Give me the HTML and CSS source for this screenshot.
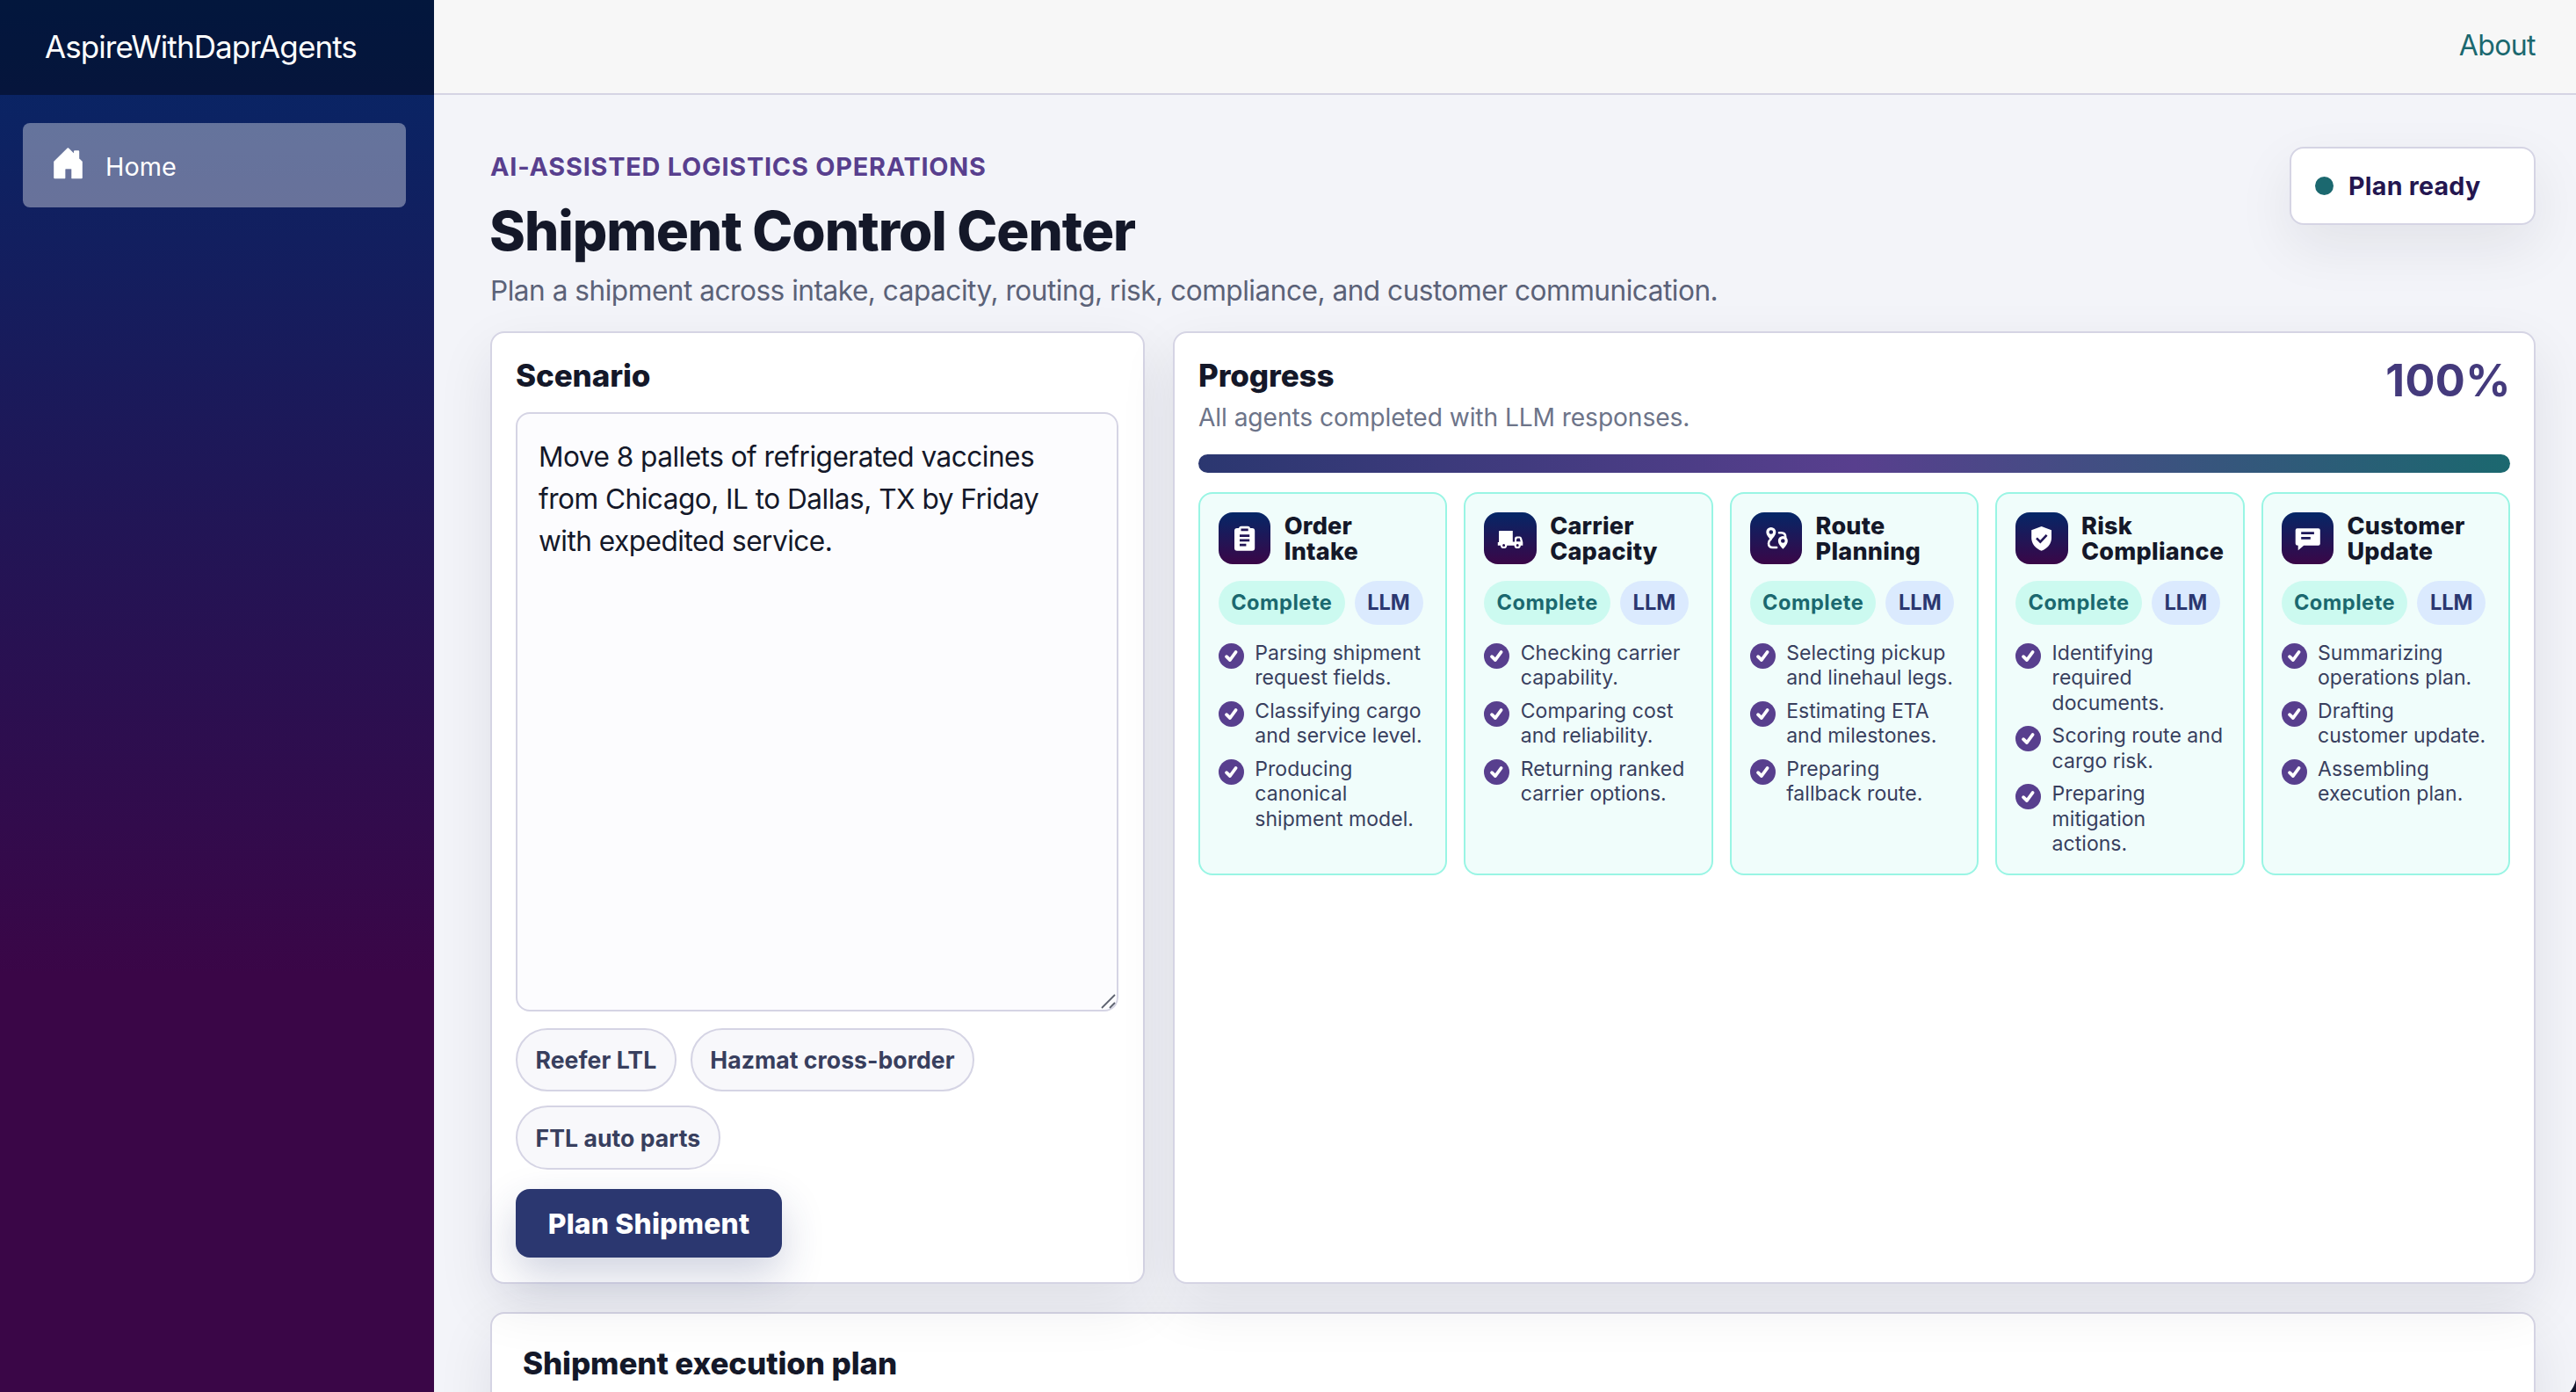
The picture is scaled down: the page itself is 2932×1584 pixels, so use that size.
FILE: index.html
```html
<!DOCTYPE html>
<html lang="en">
<head>
<meta charset="utf-8">
<title>Shipment Control Center</title>
<link rel="stylesheet" href="styles.css">
</head>
<body>
<svg class="defs" width="0" height="0" aria-hidden="true">
  <symbol id="check" viewBox="0 0 29 29">
    <circle cx="14.5" cy="14.5" r="14.5" fill="#583f8e"/>
    <path d="M9 15.2l4 3.8 6.6-9" fill="none" stroke="#fff" stroke-width="3.8" stroke-linecap="round" stroke-linejoin="round"/>
  </symbol>
</svg>
<div class="app">
  <aside class="sidebar">
    <div class="brand">AspireWithDaprAgents</div>
    <nav class="nav">
      <a class="nav-link">
        <svg class="home-icon" width="33" height="36" viewBox="0 0 33 36"><path d="M1.2 16.2L16.4 1.3 24 8.6V4.2h4.2v8.6l3.6 3.4v18.1H20.7V23.7h-8v10.6H1.2z" fill="#fff" stroke="#fff" stroke-width="2" stroke-linejoin="round"/><path d="M13.5 24.4h6.8V36h-6.8z" fill="#68729c"/></svg>
        <span>Home</span>
      </a>
    </nav>
  </aside>
  <main class="main">
    <div class="topbar"><a class="about">About</a></div>
    <div class="content">
      <header class="hero">
        <div>
          <p class="eyebrow">AI-ASSISTED LOGISTICS OPERATIONS</p>
          <h1 class="title">Shipment Control Center</h1>
          <p class="subtitle">Plan a shipment across intake, capacity, routing, risk, compliance, and customer communication.</p>
        </div>
        <div class="status"><span class="dot"></span><span>Plan ready</span></div>
      </header>

      <div class="panels">
        <section class="card scenario">
          <h2 class="heading">Scenario</h2>
          <div class="textarea">Move 8 pallets of refrigerated vaccines<br>from Chicago, IL to Dallas, TX by Friday<br>with expedited service.
            <svg class="grip" width="17" height="17" viewBox="0 0 17 17"><path d="M1 16L16 1M10 16l6-6" stroke="#5f6471" stroke-width="1.8"/></svg>
          </div>
          <div class="chips">
            <span class="chip">Reefer LTL</span>
            <span class="chip">Hazmat cross-border</span>
            <span class="chip">FTL auto parts</span>
          </div>
          <button class="plan-button">Plan Shipment</button>
        </section>

        <section class="card progress">
          <div class="progress-head">
            <div>
              <h2 class="heading">Progress</h2>
              <p class="progress-note">All agents completed with LLM responses.</p>
            </div>
            <div class="percent">100%</div>
          </div>
          <div class="bar"></div>
          <div class="agents">
            <article class="agent">
              <div class="agent-head">
                <span class="agent-icon"><svg viewBox="0 0 60 60"><rect x="18" y="18" width="23.2" height="25.8" rx="3" fill="#fff"/><rect x="23" y="15.7" width="13" height="8" rx="3" fill="#fff"/><path d="M25.5 18.4h8.2v2.8h-8.2zM24 25.2h11.2v2.7H24zM24 30.5h11.2v2.7H24zM24 35.8h7.4v2.7H24z" fill="#211455"/></svg></span>
                <h3 class="agent-name">Order<br>Intake</h3>
              </div>
              <div class="badges"><span class="badge done">Complete</span><span class="badge llm">LLM</span></div>
              <ul class="steps">
                <li><svg><use href="#check"/></svg><span>Parsing shipment<br>request fields.</span></li>
                <li><svg><use href="#check"/></svg><span>Classifying cargo<br>and service level.</span></li>
                <li><svg><use href="#check"/></svg><span>Producing<br>canonical<br>shipment model.</span></li>
              </ul>
            </article>
            <article class="agent">
              <div class="agent-head">
                <span class="agent-icon"><svg viewBox="0 0 60 60"><path d="M17.8 21h15v12.5h2.2V30q0-2.5 2.5-2.5h3.2q1.8 0 2.4 2l1.2 4.5v3.7H15.8V34h1.2V22q0-1 .8-1z" fill="#fff"/><path d="M37 33.2v-2.4l1.2-1.2h2.6l.9 3.6z" fill="#211455"/><circle cx="22.6" cy="37.4" r="2.6" fill="#2a0f4f" stroke="#fff" stroke-width="2.2"/><circle cx="38.2" cy="37.4" r="2.6" fill="#2a0f4f" stroke="#fff" stroke-width="2.2"/></svg></span>
                <h3 class="agent-name">Carrier<br>Capacity</h3>
              </div>
              <div class="badges"><span class="badge done">Complete</span><span class="badge llm">LLM</span></div>
              <ul class="steps">
                <li><svg><use href="#check"/></svg><span>Checking carrier<br>capability.</span></li>
                <li><svg><use href="#check"/></svg><span>Comparing cost<br>and reliability.</span></li>
                <li><svg><use href="#check"/></svg><span>Returning ranked<br>carrier options.</span></li>
              </ul>
            </article>
            <article class="agent">
              <div class="agent-head">
                <span class="agent-icon"><svg viewBox="0 0 60 60"><g fill="#fff" fill-rule="evenodd"><path d="M23.8 17a5.5 5.5 0 0 1 5.5 5.5c0 3.2-2.8 6.4-5.5 9.2-2.7-2.8-5.5-6-5.5-9.2A5.5 5.5 0 0 1 23.8 17zm0 3.2a2.3 2.3 0 1 0 0 4.6 2.3 2.3 0 0 0 0-4.6z"/><path d="M37.3 27a5.5 5.5 0 0 1 5.5 5.5c0 3.2-2.8 6.4-5.5 9.2-2.7-2.8-5.5-6-5.5-9.2a5.5 5.5 0 0 1 5.5-5.5zm0 3.2a2.3 2.3 0 1 0 0 4.6 2.3 2.3 0 0 0 0-4.6z"/></g><path d="M23.6 30.5q-2.6 2-2.6 4.7 0 4.8 4.8 4.8h4.3M33 23.2h2.5q4.7 0 4.7 5" fill="none" stroke="#fff" stroke-width="2.6" stroke-linecap="round"/></svg></span>
                <h3 class="agent-name">Route<br>Planning</h3>
              </div>
              <div class="badges"><span class="badge done">Complete</span><span class="badge llm">LLM</span></div>
              <ul class="steps">
                <li><svg><use href="#check"/></svg><span>Selecting pickup<br>and linehaul legs.</span></li>
                <li><svg><use href="#check"/></svg><span>Estimating ETA<br>and milestones.</span></li>
                <li><svg><use href="#check"/></svg><span>Preparing<br>fallback route.</span></li>
              </ul>
            </article>
            <article class="agent">
              <div class="agent-head">
                <span class="agent-icon"><svg viewBox="0 0 60 60"><path d="M29.6 16l11.4 4.2V29c0 6.800-4.600 12.200-11.400 14.700C22.800 41.200 18.200 35.800 18.200 29v-8.800z" fill="#fff"/><path d="M24 29.300l4.300 4.300 7.300-7.800" fill="none" stroke="#211455" stroke-width="2.600"/></svg></span>
                <h3 class="agent-name">Risk<br>Compliance</h3>
              </div>
              <div class="badges"><span class="badge done">Complete</span><span class="badge llm">LLM</span></div>
              <ul class="steps">
                <li><svg><use href="#check"/></svg><span>Identifying<br>required<br>documents.</span></li>
                <li><svg><use href="#check"/></svg><span>Scoring route and<br>cargo risk.</span></li>
                <li><svg><use href="#check"/></svg><span>Preparing<br>mitigation<br>actions.</span></li>
              </ul>
            </article>
            <article class="agent">
              <div class="agent-head">
                <span class="agent-icon"><svg viewBox="0 0 60 60"><path d="M17.700 18.200h24q2.100 0 2.100 2.100v15.400q0 2.100-2.100 2.100H25.200l-6.500 5.400v-5.400q-3 0-3-2.500v-15q0-2.100 2-2.100z" fill="#fff"/><path d="M22.200 22.300h14.700v2.800H22.200zM22.200 28h10.600v2.800H22.200z" fill="#1d1859"/></svg></span>
                <h3 class="agent-name">Customer<br>Update</h3>
              </div>
              <div class="badges"><span class="badge done">Complete</span><span class="badge llm">LLM</span></div>
              <ul class="steps">
                <li><svg><use href="#check"/></svg><span>Summarizing<br>operations plan.</span></li>
                <li><svg><use href="#check"/></svg><span>Drafting<br>customer update.</span></li>
                <li><svg><use href="#check"/></svg><span>Assembling<br>execution plan.</span></li>
              </ul>
            </article>
          </div>
        </section>
      </div>

      <section class="card plan">
        <h2 class="heading plan-heading">Shipment execution plan</h2>
      </section>
    </div>
  </main>
  <svg class="window-corner" width="7" height="14" viewBox="0 0 7 14"><path d="M7 0Q5 8 0 14h7z" fill="#11132a"/></svg>
</div>
</body>
</html>
```
FILE: styles.css
```css
* { box-sizing: border-box; }
html, body { margin: 0; height: 1584px; overflow: hidden; }
body { font-family: Inter, "Liberation Sans", sans-serif; color: #141829; background: #f3f4f9; }
h1, h2, h3, p, ul { margin: 0; padding: 0; }
.defs { position: absolute; }

.app { position: relative; display: flex; height: 1584px; overflow: hidden; }

.sidebar { width: 494px; flex: none; background: linear-gradient(180deg, #052767 0%, #3a0647 70%); }
.brand { height: 108px; padding: 0 0 3px 51px; display: flex; align-items: center; background: rgba(0, 0, 0, .4); color: #fff; font-size: 35px; letter-spacing: -.92px; }
.nav { padding: 32px 32px 0 26px; }
.nav-link { display: flex; align-items: center; height: 96px; padding: 2px 0 0 35px; border-radius: 8px; background: rgba(255, 255, 255, .37); color: #fff; font-size: 28.8px; letter-spacing: 0; }
.home-icon { margin: -6px 26px 0 0; }

.main { flex: 1; min-width: 0; display: flex; flex-direction: column; }
.topbar { height: 108px; flex: none; display: flex; align-items: center; justify-content: flex-end; padding: 0 46px 3px 0; border-bottom: 2px solid #d5d4e4; background: #f7f7f7; }
.about { color: #1b686f; font-size: 32px; letter-spacing: -.6px; }
.content { padding: 59px 46px 0 64px; }

.hero { display: flex; justify-content: space-between; align-items: flex-start; margin-bottom: 22.4px; }
.eyebrow { color: #583f8e; font-size: 28.8px; font-weight: 700; line-height: 45.6px; letter-spacing: .8px; }
.title { margin: 14.3px 0 0 -1px; font-size: 62px; font-weight: 800; line-height: 72px; letter-spacing: -1.05px; }
.subtitle { margin-top: 7.7px; color: #5b6278; font-size: 31.6px; line-height: 48px; letter-spacing: -.49px; }
.status { width: 280px; height: 89px; display: flex; align-items: center; gap: 17px; padding-left: 27px; border: 2px solid #d5d4e4; border-radius: 16px; background: #fff; box-shadow: 0 24px 64px rgba(20, 22, 40, .08); color: #241650; font-size: 28.6px; font-weight: 700; letter-spacing: .25px; }
.dot { width: 21px; height: 21px; border-radius: 50%; background: #1b686f; }

.panels { position: relative; z-index: 1; display: grid; grid-template-columns: 745px 1fr; gap: 32px; height: 1084px; }
.card { border: 2px solid #d5d4e4; border-radius: 16px; background: #fff; box-shadow: 0 24px 64px rgba(20, 22, 40, .09); }
.heading { font-size: 35px; font-weight: 800; line-height: 42.6px; letter-spacing: -.12px; }
.scenario, .progress { padding: 27px; }

.textarea { position: relative; width: 686px; height: 682px; margin-top: 20.4px; padding: 24.6px 24px; border: 2px solid #d5d4e4; border-radius: 16px; background: #fcfcfe; font-size: 31.6px; line-height: 48px; letter-spacing: -.52px; color: #141829; white-space: nowrap; }
.grip { position: absolute; right: 1px; bottom: 1px; }
.chips { display: flex; flex-wrap: wrap; gap: 16px; margin-top: 19px; }
.chip { height: 72.5px; padding: 0 20.5px; display: flex; align-items: center; border: 2px solid #d5d4e4; border-radius: 37px; background: #f8f8fb; color: #383f5e; font-size: 26.6px; font-weight: 700; letter-spacing: .05px; }
.plan-button { display: block; width: 303px; height: 78px; margin-top: 22px; padding: 0; border: 0; border-radius: 16px; background: #2b3770; box-shadow: 0 20px 48px rgba(43, 55, 112, .22); color: #fff; font: 800 31.8px/79px Inter, sans-serif; letter-spacing: .2px; text-align: center; }

.progress-head { display: flex; justify-content: space-between; }
.progress-note { margin-top: 5px; color: #6d7489; font-size: 28.2px; line-height: 42px; letter-spacing: -.1px; }
.percent { margin-right: -1px; color: #443a7c; font-size: 50.5px; font-weight: 700; line-height: 53.6px; letter-spacing: .4px; }
.bar { height: 21px; margin-top: 21.4px; border-radius: 11px; background: linear-gradient(90deg, #2b3770, #583f8e 50%, #1b686f); }
.agents { display: grid; grid-template-columns: repeat(5, 1fr); gap: 19.2px; margin-top: 22px; }
.agent { height: 436px; min-width: 0; padding: 21px; border: 2px solid #99f5e4; border-radius: 16px; background: #f0fdfb; }
.agent-head { display: flex; align-items: center; gap: 15.5px; height: 59px; }
.agent-icon { width: 59.2px; height: 59px; flex: none; border-radius: 16px; background: linear-gradient(180deg, #052767 0%, #3a0647 100%); }
.agent-icon svg { display: block; width: 60px; height: 60px; }
.agent-name { padding-top: 2px; font-size: 27px; font-weight: 800; line-height: 29.4px; letter-spacing: .25px; white-space: nowrap; }
.badges { display: flex; gap: 11px; margin-top: 19px; }
.badge { height: 50px; display: flex; align-items: center; justify-content: center; border-radius: 25px; font-size: 23.6px; font-weight: 700; }
.done { width: 143.5px; background: #ccfaf0; color: #1b686f; letter-spacing: .5px; }
.llm { width: 78px; background: #dbeafe; color: #2b3770; }
.steps { list-style: none; display: flex; flex-direction: column; gap: 9.8px; margin-top: 17.4px; color: #383f5e; font-size: 23px; line-height: 28.1px; letter-spacing: .03px; }
.steps li { display: flex; gap: 12.3px; white-space: nowrap; }
.steps span { padding-top: 1px; margin-bottom: -1px; }
.steps svg { width: 29px; height: 29px; flex: none; margin-top: 3.6px; margin-bottom: -4px; }

.plan { height: 400px; margin-top: 32px; padding: 35px; }
.window-corner { position: absolute; right: 0; bottom: 0; z-index: 2; }
```
